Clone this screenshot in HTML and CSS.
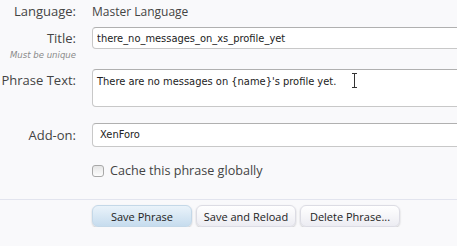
FILE: index.html
```html
<!DOCTYPE html>
<html lang="en">
    <head>
        <meta charset="utf-8">
        <title>Edit Phrase</title>
        <link rel="stylesheet" href="styles.css">
    </head>
    <body>
        <form class="phrase-form" action="#">
            <div class="ctrl-unit ctrl-static">
                <div class="ctrl-label">Language:</div>
                <div class="ctrl-value">Master Language</div>
            </div>
            <div class="ctrl-unit ctrl-title">
                <div class="ctrl-label">
                    <label for="title">Title:</label>
                    <small class="hint">Must be unique</small>
                </div>
                <div class="ctrl-value">
                    <input type="text" class="text-input" id="title" value="there_no_messages_on_xs_profile_yet">
                </div>
            </div>
            <div class="ctrl-unit ctrl-phrase">
                <div class="ctrl-label"><label for="phrase">Phrase Text:</label></div>
                <div class="ctrl-value">
                    <textarea class="text-input text-area" id="phrase">There are no messages on {name}'s profile yet.</textarea>
                    <span class="caret-cursor"></span>
                </div>
            </div>
            <div class="ctrl-unit ctrl-addon">
                <div class="ctrl-label"><label for="addon">Add-on:</label></div>
                <div class="ctrl-value">
                    <div class="text-input select-box" id="addon">XenForo</div>
                </div>
            </div>
            <div class="ctrl-unit ctrl-check">
                <div class="ctrl-label"></div>
                <div class="ctrl-value">
                    <label class="check-label"><span class="check-box"></span>Cache this phrase globally</label>
                </div>
            </div>
            <div class="submit-unit">
                <div class="ctrl-label"></div>
                <div class="button-row">
                    <button type="button" class="button primary">Save Phrase</button>
                    <button type="button" class="button">Save and Reload</button>
                    <button type="button" class="button">Delete Phrase...</button>
                </div>
            </div>
        </form>
    </body>
</html>
```

FILE: styles.css
```css
body {
    margin: 0;
    background: #f9f9fb;
    color: #333;
    font-family: "Open Sans", "Liberation Sans", sans-serif;
    font-size: 12px;
    overflow: hidden;
}
.phrase-form {
    width: 560px;
    padding-top: 3px;
}
.ctrl-unit {
    display: flex;
    align-items: flex-start;
}
.ctrl-label {
    width: 76px;
    flex: none;
    margin-right: 16px;
    text-align: right;
    color: #444;
    font-size: 13px;
}
.ctrl-value {
    flex: 1;
    position: relative;
}
.ctrl-static {
    height: 24px;
    line-height: 17px;
}
.ctrl-static .ctrl-value {
    color: #444;
}
.ctrl-title {
    height: 42px;
}
.ctrl-title .ctrl-label {
    padding-top: 2px;
    line-height: 18px;
}
.hint {
    display: block;
    margin-top: 3px;
    font-family: "DejaVu Sans", sans-serif;
    font-stretch: condensed;
    font-style: italic;
    font-size: 9.5px;
    line-height: 10px;
    color: #8a8a8a;
}
.text-input {
    box-sizing: border-box;
    width: 100%;
    height: 22px;
    margin: 0;
    padding: 2px 4px;
    border: 1px solid #c8c8c8;
    border-top-color: #b0b0b0;
    border-radius: 4px;
    background: #fff;
    font-family: "DejaVu Sans", sans-serif;
    font-stretch: condensed;
    font-size: 11px;
    color: #222;
    outline: none;
}
.ctrl-phrase {
    height: 54px;
}
.ctrl-phrase .ctrl-label {
    padding-top: 3px;
    line-height: 17px;
}
.text-area {
    display: block;
    height: 38px;
    resize: none;
    padding-top: 5px;
}
.caret-cursor {
    position: absolute;
    left: 260px;
    top: 4px;
    width: 5px;
    height: 15px;
    border-top: 1px solid #333;
    border-bottom: 1px solid #333;
    box-sizing: border-box;
}
.caret-cursor::before {
    content: "";
    position: absolute;
    left: 2px;
    top: 0;
    width: 1px;
    height: 13px;
    background: #333;
}
.ctrl-addon {
    height: 40px;
}
.ctrl-addon .ctrl-label {
    padding-top: 4px;
    line-height: 17px;
}
.select-box {
    height: 24px;
    line-height: 18px;
    padding-left: 7px;
}
.ctrl-check {
    height: 36px;
}
.check-label {
    display: flex;
    align-items: center;
    gap: 6px;
    font-size: 12.6px;
    line-height: 16px;
    color: #444;
}
.check-box {
    box-sizing: border-box;
    width: 12px;
    height: 12px;
    border: 1px solid #a8a8a8;
    border-radius: 3px;
    background: linear-gradient(#e6e6e6, #fdfdfd);
}
.submit-unit {
    display: flex;
    border-top: 1px solid #e2e4ee;
    padding-top: 5px;
}
.button-row {
    display: flex;
    gap: 4px;
}
.button {
    width: 100px;
    height: 22px;
    border: 1px solid #dcdce4;
    border-radius: 6px;
    background: linear-gradient(#ffffff, #ececf2);
    box-shadow: 0 1px 2px rgba(0, 0, 0, 0.2);
    font-family: "Open Sans", "Liberation Sans", sans-serif;
    font-size: 11px;
    color: #222;
    padding: 0;
}
.button.primary {
    border-color: #c4d8e8;
    background: linear-gradient(#eaf3fa, #c6dcee);
}
```
